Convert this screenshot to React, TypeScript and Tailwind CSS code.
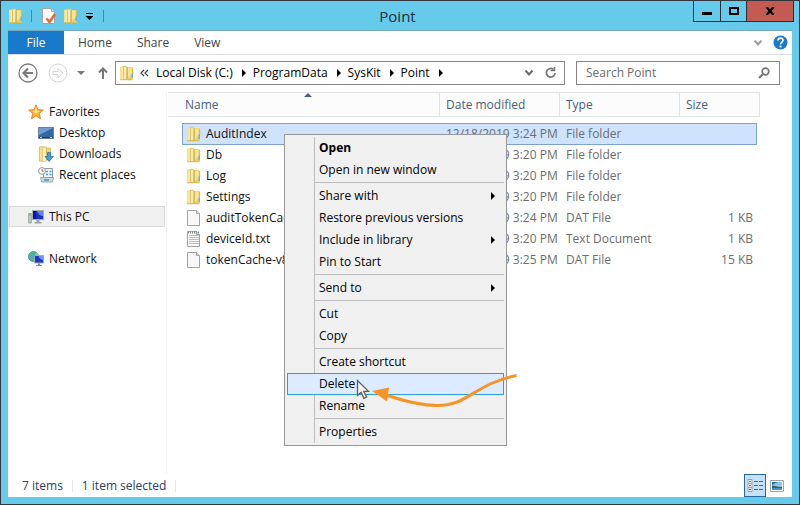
import type { ReactNode } from "react";

function FolderIcon() {
  return (
    <svg width="16" height="16" viewBox="0 0 16 16" className="shrink-0">
      <path d="M1 2l5-1.500 2 .8V15H1.500L1 14z" fill="#eed57a" />
      <path d="M1.500 2.500L4 2v12.500H1.500z" fill="#f7e8a6" />
      <path d="M4 1.500L8 .8v13.700L4 15z" fill="#e3c35e" />
      <path d="M5 2l3-.6V14l-3 .6z" fill="#f9eeb8" />
      <path d="M8 2h5l1 1v11l-1 1H7.500z" fill="#ecd069" />
      <path d="M9 2.500h3.500V9L9 13z" fill="#f6e596" />
      <path d="M8 2v13.300" stroke="#c4a23e" />
      <path d="M1 14.800h6M9 14.800h4.500M13.700 3v6" stroke="#d2b04e" strokeWidth=".8" />
      <path d="M12.500 8.500H14V13h-1.500z" fill="#6bb2e6" />
    </svg>
  );
}

function FileIcon({ lined = false }: { lined?: boolean }) {
  return (
    <svg width="16" height="16" viewBox="0 0 16 16" className="shrink-0">
      <path d="M1.500.5h9l3 3v12h-12z" fill="#f8f8f8" stroke="#a2a2a2" />
      <path d="M10.500.5v3h3" fill="#e4e4e4" stroke="#a2a2a2" />
      {lined && (
        <>
          <path d="M2 1.500h12" stroke="#7d8288" strokeWidth="2" strokeDasharray="1 1" />
          <path d="M3 4.500h10M3 6.500h10M3 8.500h10M3 10.500h10M3 12.500h10" stroke="#b4bfc9" />
        </>
      )}
    </svg>
  );
}

function StarIcon() {
  return (
    <svg width="16" height="16" viewBox="0 0 16 16" className="shrink-0">
      <path d="M8 .8l1.900 4.900 5.400.3-4.200 3.400 1.500 5.400L8 11.700l-4.600 3.100 1.500-5.400L.7 6l5.400-.3z" fill="#fdb731" stroke="#e07b25" strokeWidth=".9" />
      <path d="M8 3l1.200 3.700L12 7 8 9.500 4 7l2.800-.3z" fill="#ffe38a" />
    </svg>
  );
}

function DesktopIcon() {
  return (
    <svg width="16" height="16" viewBox="0 0 16 16" className="shrink-0">
      <path d="M.5 2.500h15v11H.5z" fill="#3567a5" stroke="#6c7f93" />
      <path d="M1 3h14L1 10z" fill="#6f9dd2" />
      <path d="M1 12.500h14" stroke="#1f3552" />
      <path d="M2 12.500h2M12 12.500h2" stroke="#b9cadb" />
    </svg>
  );
}

function DownloadsIcon() {
  return (
    <svg width="16" height="16" viewBox="0 0 16 16" className="shrink-0">
      <path d="M1.500.8h5l1 1V15l-6 .2z" fill="#f3e093" stroke="#cdb14f" strokeWidth=".7" />
      <path d="M4.500 1.800l4-1v14l-4 1z" fill="#fbefb4" stroke="#d8bf62" strokeWidth=".6" />
      <path d="M8.500 2h4v12h-4z" fill="#efd674" stroke="#c9a53f" strokeWidth=".6" />
      <path d="M9.500 6.500h3.200v4h2.600L11.100 15.400 7 10.500h2.500z" fill="#3a9de5" stroke="#1d6bb2" strokeWidth=".7" />
    </svg>
  );
}

function RecentIcon() {
  return (
    <svg width="16" height="16" viewBox="0 0 16 16" className="shrink-0">
      <path d="M5.500 1.500h9v9h-9z" fill="#f2f4f6" stroke="#8f979e" />
      <path d="M8 4.500h2M11.500 4.500h2M8 7.500h2M11.500 7.500h2" stroke="#4c9ade" strokeWidth="1.600" />
      <path d="M2.500 10.500h13l-1 4.500h-11z" fill="#d4d8db" stroke="#8f979e" strokeWidth=".8" />
      <path d="M6 13h5" stroke="#2f9fd6" strokeWidth="1.500" />
      <circle cx="4" cy="4" r="3.400" fill="#fff" stroke="#8b949c" />
      <path d="M4 2v2.200h1.800" stroke="#56606a" strokeWidth=".8" fill="none" />
    </svg>
  );
}

function PcIcon() {
  return (
    <svg width="16" height="16" viewBox="0 0 16 16" className="shrink-0">
      <path d="M.7 4.500h2.600v9.500H.7z" fill="#c9cfc9" stroke="#7e8a80" strokeWidth=".7" />
      <path d="M1.300 6h1.400" stroke="#3e9b3c" />
      <path d="M4.500 1.500h11v9h-11z" fill="#1c2fc4" stroke="#a6adb8" />
      <path d="M9 2h6v5c-3 0-5-2-6-5z" fill="#5f86ec" />
      <path d="M5 2h3v8H5z" fill="#0b1795" />
      <path d="M8.500 11h3v2h2v1.500h-7V13h2z" fill="#9aa1a8" />
    </svg>
  );
}

function NetworkIcon() {
  return (
    <svg width="16" height="16" viewBox="0 0 16 16" className="shrink-0">
      <circle cx="5.500" cy="5.500" r="5" fill="#4aa7df" stroke="#2b78ad" strokeWidth=".7" />
      <path d="M2 2.500c2-2 4-1.500 4 0S3.500 5 2 6.500zM3 7c2 0 3 1 2 3C3 10 2 9 3 7z" fill="#4fbf5d" />
      <path d="M8 1.200c2 1 2.500 2.500 2.300 4H7.500z" fill="#8edb7b" />
      <path d="M6.500 4.500h9v7.500h-9z" fill="#1c35cb" stroke="#9fabbb" />
      <path d="M10.500 5H15v4c-2 0-4-2-4.500-4z" fill="#6d92ef" />
      <path d="M10 12.500h2V14h2v1H8v-1h2z" fill="#6f8eb5" />
    </svg>
  );
}

function Chevron({ className = "" }: { className?: string }) {
  return (
    <svg width="10" height="8" viewBox="0 0 10 8" className={className}>
      <path d="M1.500 1.500L5 5.500l3.500-4" fill="none" stroke="currentColor" strokeWidth="2" />
    </svg>
  );
}

function RightArrow() {
  return (
    <svg width="4" height="8" viewBox="0 0 4 8" className="shrink-0">
      <path d="M0 0l4 4-4 4z" fill="currentColor" />
    </svg>
  );
}

function TitleBar() {
  return (
    <header className="grid h-[29px] grid-cols-[1fr_auto_1fr] pr-[5px]">
      <div className="flex items-center pl-[7px]">
        <FolderIcon />
        <span className="ml-[7px] h-3 w-px bg-[#4c8598]" />
        <button aria-label="Properties" className="ml-[9px]">
          <svg width="16" height="16" viewBox="0 0 16 16">
            <path d="M1.500.5h9l3 3v12h-12z" fill="#fafafa" stroke="#a5a5a5" />
            <path d="M10.500.5v3h3" fill="#ddd" stroke="#a5a5a5" />
            <path d="M5.500 10.500l3 3.500 5.500-8" fill="none" stroke="#e8683a" strokeWidth="2.500" />
          </svg>
        </button>
        <button aria-label="New folder" className="ml-[6px]"><FolderIcon /></button>
        <button aria-label="Customize toolbar" className="ml-[6px]">
          <svg width="8" height="8" viewBox="0 0 8 8">
            <path d="M1 1.500h7" stroke="#000" />
            <path d="M.5 4h8L4.500 8z" fill="#000" />
          </svg>
        </button>
        <span className="ml-[10px] h-3 w-px bg-[#4c8598]" />
      </div>
      <h1 className="self-center text-[15px] leading-5 text-[#17303a]">Point</h1>
      <div className="flex h-[21px] justify-self-end border-x border-b border-[#2d2d32]">
        <button aria-label="Minimize" className="flex w-[27px] items-center justify-center border-r border-[#2d2d32]">
          <span className="mt-1 h-[3px] w-[10px] bg-black" />
        </button>
        <button aria-label="Maximize" className="flex w-[26px] items-center justify-center border-r border-[#2d2d32]">
          <span className="h-2 w-[10px] border-2 border-black" />
        </button>
        <button aria-label="Close" className="flex w-[46px] items-center justify-center bg-[#c35b52]">
          <svg width="10" height="8" viewBox="0 0 10 8">
            <path d="M1.500 0l7 8M8.500 0l-7 8" stroke="#000" strokeWidth="2.200" />
          </svg>
        </button>
      </div>
    </header>
  );
}

function Ribbon() {
  return (
    <nav className="flex h-6 items-center border-b border-[#dcdcdc] pr-1 text-[#444]">
      <button className="h-[23px] w-14 bg-[#1979ca] text-white">File</button>
      <div className="ml-[14px] flex gap-[25px]">
        <button>Home</button>
        <button>Share</button>
        <button>View</button>
      </div>
      <button aria-label="Expand the ribbon" className="ml-auto text-[#a0a0a0]"><Chevron /></button>
      <button aria-label="Help" className="ml-[10px]">
        <svg width="15" height="15" viewBox="0 0 15 15">
          <circle cx="7.500" cy="7.500" r="7" fill="#1979ca" />
          <path d="M5 5.500c0-3.200 5-3.200 5-.2 0 2-2.500 2-2.500 4" fill="none" stroke="#fff" strokeWidth="1.700" />
          <path d="M6.500 10.600h2v1.800h-2z" fill="#fff" />
        </svg>
      </button>
    </nav>
  );
}

const crumbs = ["Local Disk (C:)", "ProgramData", "SysKit", "Point"];

function AddressBar() {
  return (
    <div className="flex items-center pt-[6px] pr-3 pl-[10px]">
      <button aria-label="Back">
        <svg width="20" height="20" viewBox="0 0 20 20" fill="none" stroke="#7b7b7b">
          <circle cx="10" cy="10" r="9" strokeWidth="1.300" />
          <path d="M15 10H6M10 5.500L5.500 10l4.500 4.500" strokeWidth="2.200" />
        </svg>
      </button>
      <button aria-label="Forward" className="ml-[10px]">
        <svg width="20" height="20" viewBox="0 0 20 20" fill="none" stroke="#d5d5d5">
          <circle cx="10" cy="10" r="9" />
          <path d="M5 8.500h5v-3l5 4.500-5 4.500v-3H5z" />
        </svg>
      </button>
      <button aria-label="Recent locations" className="ml-[9px]">
        <svg width="8" height="4" viewBox="0 0 8 4"><path d="M0 0h8L4 4z" fill="#777" /></svg>
      </button>
      <button aria-label="Up" className="ml-[13px]">
        <svg width="10" height="12" viewBox="0 0 10 12" fill="none" stroke="#777" strokeWidth="2">
          <path d="M5 12V2M1 5.500l4-4 4 4" />
        </svg>
      </button>
      <div className="ml-[7px] flex h-6 flex-1 items-center border border-[#858585] pr-[7px] pl-[3px]">
        <FolderIcon />
        <svg width="9" height="8" viewBox="0 0 9 8" className="ml-[5px]" fill="none" stroke="#444" strokeWidth="1.200">
          <path d="M4 1L1 4l3 3M8 1L5 4l3 3" />
        </svg>
        <ol className="ml-[7px] flex items-center gap-[7px]">
          {crumbs.map((name) => (
            <li key={name} className="flex items-center gap-[9px]">
              <button className="text-black">{name}</button>
              <RightArrow />
            </li>
          ))}
        </ol>
        <button aria-label="Previous locations" className="ml-auto text-[#6b6b6b]"><Chevron /></button>
        <button aria-label="Refresh" className="ml-[11px]">
          <svg width="12" height="12" viewBox="0 0 12 12" fill="none" stroke="#7a7a7a" strokeWidth="1.800">
            <path d="M8.500 2.500A4.300 4.300 0 1 0 10 6" />
            <path d="M5.500 3.500h4V0" strokeWidth="1.500" />
          </svg>
        </button>
      </div>
      <label className="ml-[11px] flex h-6 w-[204px] items-center border border-[#858585] pr-[9px] pl-[9px]">
        <input type="text" aria-label="Search Point" placeholder="Search Point" className="min-w-0 flex-1 bg-transparent outline-none placeholder:text-[#6d6d6d]" />
        <svg width="12" height="12" viewBox="0 0 12 12" fill="none" stroke="#777">
          <circle cx="7.500" cy="4.500" r="3.300" strokeWidth="1.700" />
          <path d="M5 7L1 11" strokeWidth="2.200" />
        </svg>
      </label>
    </div>
  );
}

function SideItem({ icon, label, nested = false, active = false }: { icon: ReactNode; label: string; nested?: boolean; active?: boolean }) {
  return (
    <li>
      <a
        href="#"
        className={`flex h-[21px] items-center gap-[5px] border ${nested ? "pl-7" : "pl-[18px]"} ${active ? "border-[#dadada] bg-[#f0f0f0]" : "border-transparent"}`}
      >
        {icon}
        {label}
      </a>
    </li>
  );
}

function Sidebar() {
  return (
    <aside className="w-[159px] shrink-0 border-r border-[#f2f2f2] pt-[9px] pr-px pl-px text-[#111]">
      <ul className="flex flex-col">
        <SideItem icon={<StarIcon />} label="Favorites" />
        <SideItem icon={<DesktopIcon />} label="Desktop" nested />
        <SideItem icon={<DownloadsIcon />} label="Downloads" nested />
        <SideItem icon={<RecentIcon />} label="Recent places" nested />
      </ul>
      <ul className="mt-[21px] flex flex-col gap-[21px]">
        <SideItem icon={<PcIcon />} label="This PC" active />
        <SideItem icon={<NetworkIcon />} label="Network" />
      </ul>
    </aside>
  );
}

const files = [
  { name: "AuditIndex", date: "12/18/2019 3:24 PM", type: "File folder", size: "" },
  { name: "Db", date: "12/18/2019 3:20 PM", type: "File folder", size: "" },
  { name: "Log", date: "12/18/2019 3:20 PM", type: "File folder", size: "" },
  { name: "Settings", date: "12/18/2019 3:20 PM", type: "File folder", size: "" },
  { name: "auditTokenCache.dat", date: "12/18/2019 3:24 PM", type: "DAT File", size: "1 KB" },
  { name: "deviceId.txt", date: "12/18/2019 3:20 PM", type: "Text Document", size: "1 KB" },
  { name: "tokenCache-v8.dat", date: "12/18/2019 3:25 PM", type: "DAT File", size: "15 KB" },
];

function FileTable() {
  const head = "border-y border-r border-[#e2e2e2] bg-[#fcfcfc] p-0 text-left font-normal";
  return (
    <table className="w-[592px] table-fixed border-separate border-spacing-0 whitespace-nowrap">
      <colgroup>
        <col className="w-[14px]" />
        <col className="w-[258px]" />
        <col className="w-[120px]" />
        <col className="w-[120px]" />
        <col className="w-[77px]" />
        <col className="w-[3px]" />
      </colgroup>
      <thead className="text-[#4a5f80]">
        <tr className="h-[25px]">
          <th colSpan={2} className={`${head} relative pl-[17px]`}>
            Name
            <svg width="8" height="4" viewBox="0 0 8 4" className="absolute top-0 left-1/2"><path d="M4 0l4 4H0z" fill="#4a5f80" /></svg>
          </th>
          <th className={`${head} pl-[6px]`}>Date modified</th>
          <th className={`${head} pl-[6px]`}>Type</th>
          <th colSpan={2} className={`${head} pl-[6px]`}>Size</th>
        </tr>
      </thead>
      <tbody className="text-[#6d6d6d]">
        <tr className="h-[6px]"><td colSpan={6} className="p-0" /></tr>
        {files.map((f, i) => {
          const cell = i === 0 ? "h-[21px] border-t border-[#7da2ce] bg-[#cfe3fd] p-0 shadow-[0_1px_0_#7da2ce]" : "h-[21px] p-0";
          return (
            <tr key={f.name}>
              <td className="p-0" />
              <td className={`${cell} ${i === 0 ? "border-l pl-[3px]" : "pl-1"}`}>
                <div className="flex items-center gap-[4px] text-[#111]">
                  {f.type === "File folder" ? <FolderIcon /> : <FileIcon lined={f.type === "Text Document"} />}
                  {f.name}
                </div>
              </td>
              <td className={`${cell} pl-[6px]`}>{f.date}</td>
              <td className={`${cell} pl-[6px]`}>{f.type}</td>
              <td className={`${cell} text-right ${i === 0 ? "border-r pr-[3px]" : "pr-1"}`}>{f.size}</td>
              <td className="p-0" />
            </tr>
          );
        })}
      </tbody>
    </table>
  );
}

const menuGroups = [
  ["Open", "Open in new window"],
  ["Share with", "Restore previous versions", "Include in library", "Pin to Start"],
  ["Send to"],
  ["Cut", "Copy"],
  ["Create shortcut", "Delete", "Rename"],
  ["Properties"],
];
const submenus = ["Share with", "Include in library", "Send to"];

function ContextMenu() {
  return (
    <div role="menu" className="absolute top-[42px] left-[117px] w-[223px] border border-[#979797] bg-[#f0f0f0] p-[2px] text-black">
      <span className="absolute top-[2px] bottom-[2px] left-[29px] w-px bg-[#bdbdbd]" />
      {menuGroups.map((group, i) => (
        <div key={group[0]} role="group" className="relative">
          {i > 0 && <div role="separator" className="mt-px mb-[2px] ml-[27px] h-px bg-[#bdbdbd]" />}
          {group.map((item) => (
            <button
              key={item}
              role="menuitem"
              className={`flex h-[22px] w-full items-center justify-between border pr-2 pl-[31px] ${item === "Delete" ? "border-[#2a9fd8] bg-[#dcebff]" : "border-transparent"} ${item === "Open" ? "font-bold" : ""}`}
            >
              {item}
              {submenus.includes(item) && <RightArrow />}
            </button>
          ))}
        </div>
      ))}
      <svg width="164" height="46" viewBox="0 0 164 46" className="absolute top-[235px] left-[71px]">
        <path d="M160.500 5.500C118 14 113 35.500 81 35.500C64 35.500 46 30.500 30 25" fill="none" stroke="#f79427" strokeWidth="3" />
        <path d="M16 21l17-3.500-2 14z" fill="#f79427" />
        <path d="M1.500 10.500v15l3.600-3.200 2.800 6 2.700-1.300-2.800-5.700h4.700z" fill="#f4f4f4" stroke="#5e5e5e" strokeWidth="1.300" />
      </svg>
    </div>
  );
}

function StatusBar() {
  return (
    <footer className="flex h-[23px] items-center gap-[9px] pr-2 pl-[14px] text-[#2b3f66]">
      <span>7 items</span>
      <span className="h-3 w-px bg-[#e8e8e8]" />
      <span>1 item selected</span>
      <span className="h-3 w-px bg-[#e8e8e8]" />
      <div className="ml-auto flex items-center gap-1">
        <button aria-label="Details view" className="flex h-[23px] w-[22px] items-center justify-center border border-[#2a679b] bg-[#c5e1f7]">
          <svg width="16" height="13" viewBox="0 0 16 13">
            <path d="M1 .5h4v12H1zM1 4.500h4M1 8.500h4" fill="#fff" stroke="#9aa0a6" />
            <path d="M2.500 2h1v1h-1z" fill="#2a8a3a" stroke="#2a8a3a" strokeWidth=".6" />
            <path d="M2.500 6h1v1h-1z" fill="#d22" stroke="#d22" strokeWidth=".6" />
            <path d="M2.500 10h1v1h-1z" fill="#25d" stroke="#25d" strokeWidth=".6" />
            <path d="M7 2.500h4M12 2.500h4M7 6.500h4M12 6.500h4M7 10.500h4M12 10.500h4" stroke="#54607a" />
          </svg>
        </button>
        <button aria-label="Large icons view">
          <svg width="14" height="12" viewBox="0 0 14 12">
            <path d="M.5.5h13v11H.5z" fill="#fff" stroke="#9aa5b0" />
            <path d="M2 2h10v8H2z" fill="#8fc6ea" />
            <path d="M2 2h6L2 5z" fill="#2e70b8" />
            <path d="M2 5.500c3 0 4 1.500 10 1.500v1H2z" fill="#2d6b56" />
            <path d="M2 8h10v2H2z" fill="#4e94b8" />
          </svg>
        </button>
      </div>
    </footer>
  );
}

export default function App() {
  return (
    <div className="flex h-screen w-full flex-col border border-[#33363c] bg-[#66caea] font-['Open_Sans','Noto_Sans',sans-serif] text-[12px] leading-4">
      <TitleBar />
      <div className="mx-[7px] mb-[7px] flex min-h-0 flex-1 flex-col border-t border-[#74aabf] bg-white">
        <Ribbon />
        <AddressBar />
        <div className="flex min-h-0 flex-1 pt-[7px]">
          <Sidebar />
          <main className="relative min-w-0 flex-1 pl-px">
            <FileTable />
            <ContextMenu />
          </main>
        </div>
        <StatusBar />
      </div>
    </div>
  );
}
